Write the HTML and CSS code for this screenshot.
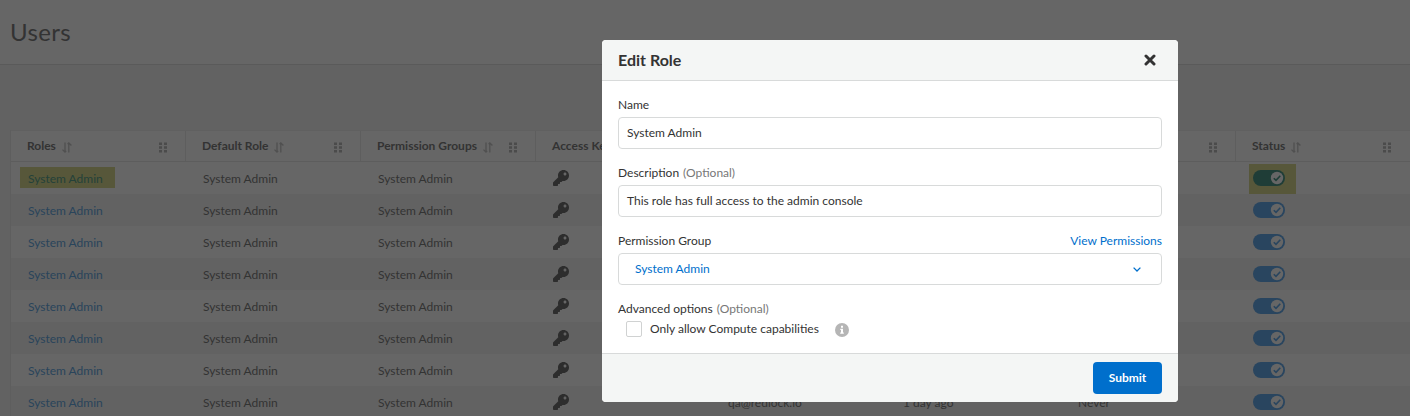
FILE: index.html
```html
<!DOCTYPE html>
<html lang="en">
<head>
<meta charset="utf-8">
<title>Users</title>
<link rel="stylesheet" href="styles.css">
</head>
<body>
<svg class="defs" aria-hidden="true">
  <symbol id="sort" viewBox="0 0 10 11"><path d="M3 .5v9.2M.5 7.6 3 10.1l1.2-1.2M6.8 10.5V1.3M5.6 2.1 6.8.9l2.6 2.6" fill="none" stroke="currentColor" stroke-width="1.3"/></symbol>
  <symbol id="grip" viewBox="0 0 8 11"><path d="M0 .5h3v2.6H0zM5 .5h3v2.6H5zM0 4.2h3v2.6H0zM5 4.2h3v2.6H5zM0 8h3v2.6H0zM5 8h3v2.6H5z" fill="currentColor"/></symbol>
  <symbol id="key" viewBox="0 0 512 512"><path fill="currentColor" d="M512 176c0 97-79 176-176 176-11 0-22-1-33-3l-24 27c-5 5-11 8-18 8h-37v40c0 13-11 24-24 24h-40v40c0 13-11 24-24 24H24c-13 0-24-11-24-24v-78c0-6 3-12 7-17l162-162c-6-17-9-36-9-55C160 79 239 0 336 0c97 0 176 79 176 176zM336 128c0 27 22 48 48 48s48-21 48-48-22-48-48-48-48 21-48 48z"/></symbol>
  <symbol id="toggle" viewBox="0 0 32 16"><rect width="32" height="16" rx="8" fill="currentColor"/><circle class="knob" cx="24" cy="8" r="6.2"/><path d="m20.8 8.2 2.2 2.2 4.3-4.6" fill="none" stroke="currentColor" stroke-width="1.6"/></symbol>
</svg>
<main class="page">
  <header class="page-header"><h1>Users</h1></header>
  <section class="table">
    <div class="row head">
      <div class="cell">Roles<svg class="sort"><use href="#sort"/></svg><svg class="grip"><use href="#grip"/></svg></div>
      <div class="cell">Default Role<svg class="sort"><use href="#sort"/></svg><svg class="grip"><use href="#grip"/></svg></div>
      <div class="cell">Permission Groups<svg class="sort"><use href="#sort"/></svg><svg class="grip"><use href="#grip"/></svg></div>
      <div class="cell">Access Keys</div>
      <div class="cell"></div>
      <div class="cell"></div>
      <div class="cell"><svg class="grip"><use href="#grip"/></svg></div>
      <div class="cell">Status<svg class="sort"><use href="#sort"/></svg><svg class="grip"><use href="#grip"/></svg></div>
    </div>
    <div class="row"><div class="cell"><a class="link marked">System Admin</a></div><div class="cell">System Admin</div><div class="cell">System Admin</div><div class="cell"><svg class="key"><use href="#key"/></svg></div><div class="cell"></div><div class="cell"></div><div class="cell"></div><div class="cell"><span class="switch marked"><svg class="toggle"><use href="#toggle"/></svg></span></div></div>
    <div class="row"><div class="cell"><a class="link">System Admin</a></div><div class="cell">System Admin</div><div class="cell">System Admin</div><div class="cell"><svg class="key"><use href="#key"/></svg></div><div class="cell"></div><div class="cell"></div><div class="cell"></div><div class="cell"><span class="switch"><svg class="toggle"><use href="#toggle"/></svg></span></div></div>
    <div class="row"><div class="cell"><a class="link">System Admin</a></div><div class="cell">System Admin</div><div class="cell">System Admin</div><div class="cell"><svg class="key"><use href="#key"/></svg></div><div class="cell"></div><div class="cell"></div><div class="cell"></div><div class="cell"><span class="switch"><svg class="toggle"><use href="#toggle"/></svg></span></div></div>
    <div class="row"><div class="cell"><a class="link">System Admin</a></div><div class="cell">System Admin</div><div class="cell">System Admin</div><div class="cell"><svg class="key"><use href="#key"/></svg></div><div class="cell"></div><div class="cell"></div><div class="cell"></div><div class="cell"><span class="switch"><svg class="toggle"><use href="#toggle"/></svg></span></div></div>
    <div class="row"><div class="cell"><a class="link">System Admin</a></div><div class="cell">System Admin</div><div class="cell">System Admin</div><div class="cell"><svg class="key"><use href="#key"/></svg></div><div class="cell"></div><div class="cell"></div><div class="cell"></div><div class="cell"><span class="switch"><svg class="toggle"><use href="#toggle"/></svg></span></div></div>
    <div class="row"><div class="cell"><a class="link">System Admin</a></div><div class="cell">System Admin</div><div class="cell">System Admin</div><div class="cell"><svg class="key"><use href="#key"/></svg></div><div class="cell"></div><div class="cell"></div><div class="cell"></div><div class="cell"><span class="switch"><svg class="toggle"><use href="#toggle"/></svg></span></div></div>
    <div class="row"><div class="cell"><a class="link">System Admin</a></div><div class="cell">System Admin</div><div class="cell">System Admin</div><div class="cell"><svg class="key"><use href="#key"/></svg></div><div class="cell"></div><div class="cell"></div><div class="cell"></div><div class="cell"><span class="switch"><svg class="toggle"><use href="#toggle"/></svg></span></div></div>
    <div class="row"><div class="cell"><a class="link">System Admin</a></div><div class="cell">System Admin</div><div class="cell">System Admin</div><div class="cell"><svg class="key"><use href="#key"/></svg></div><div class="cell">qa@redlock.io</div><div class="cell">1 day ago</div><div class="cell">Never</div><div class="cell"><span class="switch"><svg class="toggle"><use href="#toggle"/></svg></span></div></div>
  </section>
</main>
<div class="modal" role="dialog">
  <header class="modal-header">
    <h2>Edit Role</h2>
    <svg class="close" viewBox="0 0 12 12"><path d="m2 2 8 8M10 2l-8 8" stroke="currentColor" stroke-width="3" stroke-linecap="round"/></svg>
  </header>
  <div class="modal-body">
    <div class="field"><div class="label">Name</div><div class="input">System Admin</div></div>
    <div class="field"><div class="label">Description <span class="optional">(Optional)</span></div><div class="input">This role has full access to the admin console</div></div>
    <div class="field"><div class="label">Permission Group<a class="view">View Permissions</a></div>
      <div class="input select">System Admin<svg class="chevron" viewBox="0 0 8 5"><path d="m.6.6 3.4 3.4L7.4.6" fill="none" stroke="currentColor" stroke-width="1.3"/></svg></div></div>
    <div class="label advanced">Advanced options <span class="optional">(Optional)</span></div>
    <div class="check"><span class="box"></span><span>Only allow Compute capabilities</span>
      <svg class="info" viewBox="0 0 14 14"><circle cx="7" cy="7" r="7" fill="#b5b5b5"/><path d="M6 2.7h2v2H6zM5.3 5.7H8v3.8h.8v1.3H5.2V9.5H6V7h-.7z" fill="#fff"/></svg></div>
  </div>
  <footer class="modal-footer"><button class="submit">Submit</button></footer>
</div>
</body>
</html>
```
FILE: styles.css
```css
* { box-sizing: border-box; }
body { margin: 0; height: 416px; overflow: hidden; position: relative; background: #626262; color: #333; font: 12px/16px Lato, sans-serif; }
h1, h2 { margin: 0; }
svg { flex: none; display: block; }
.defs { position: absolute; width: 0; height: 0; }
.page-header { height: 65px; padding: 0 10px; display: flex; align-items: center; background: #666; border-bottom: 1px solid #5a5a5a; }
.page-header h1 { font-size: 24px; line-height: 30px; font-weight: 400; letter-spacing: .35px; }
.table { margin: 65px 0 0 10px; border-left: 1px solid #5e5e5e; }
.row { display: grid; grid-template-columns: repeat(7, 175px) 1fr; height: 32px; background: #666; }
.row:nth-child(odd) { background: #626262; }
.row.head { background: #666; font-weight: 700; border-top: 1px solid #606060; border-bottom: 1px solid #5d5d5d; }
.cell { display: flex; align-items: center; padding: 2px 17px 0; white-space: nowrap; }
.head .cell { padding: 0 17px 0 16px; border-right: 1px solid #5e5e5e; }
.head .cell:last-child { border: 0; padding-right: 18px; }
.sort { width: 10px; height: 11px; margin: 2px 0 0 6px; color: #505050; }
.grip { width: 8px; height: 11px; margin: 2px 1px 0 auto; color: #4b4b4b; }
.link { color: #29445b; }
.link.marked { margin: -3px 0 0 -8px; padding: 4px 12px 1px 8px; background: #57573a; color: #244139; }
.key { width: 16px; height: 16px; margin-top: -2px; color: #2d2d2d; }
.toggle { width: 32px; height: 16px; color: #29455f; }
.knob { fill: #666; }
.switch { margin-top: -2px; }
.switch.marked { margin: 0 0 0 -4px; padding: 6px 11px 8px 4px; background: #57573a; }
.marked .toggle { color: #1f3d37; }
.marked .knob { fill: #57573a; }
.modal { position: absolute; left: 602px; top: 40px; width: 576px; height: 362px; display: flex; flex-direction: column; background: #fff; border-radius: 4px; overflow: hidden; }
.modal-header { height: 41px; padding: 0 22px 0 16px; display: flex; justify-content: space-between; align-items: center; background: #f4f6f5; border-bottom: 1px solid #d8dada; }
.modal-header h2 { font-size: 16px; line-height: 20px; font-weight: 700; }
.close { width: 12px; height: 12px; }
.modal-body { flex: 1; padding: 16px 16px 0; }
.field { height: 68px; }
.label { display: flex; gap: 4px; height: 16px; margin-bottom: 4px; }
.optional { color: #777; }
.view { margin-left: auto; color: #006fcc; }
.input { display: flex; align-items: center; height: 32px; padding: 0 8px; border: 1px solid #d8dada; border-radius: 4px; }
.select { padding: 0 20px 0 16px; color: #006fcc; }
.chevron { width: 8px; height: 5px; margin-left: auto; }
.advanced { margin: 0; }
.check { height: 24px; padding-left: 8px; display: flex; align-items: center; }
.box { width: 16px; height: 16px; margin-right: 8px; border: 1px solid #d0d2d2; border-radius: 2px; }
.info { width: 14px; height: 14px; margin: 1px 0 0 16px; }
.modal-footer { height: 49px; padding: 8px 16px; display: flex; justify-content: flex-end; background: #f4f6f5; border-top: 1px solid #d8dada; }
.submit { width: 69px; height: 32px; padding: 0; border: 0; border-radius: 4px; background: #006fcc; color: #fff; font: 700 12px/16px Lato, sans-serif; }
```
